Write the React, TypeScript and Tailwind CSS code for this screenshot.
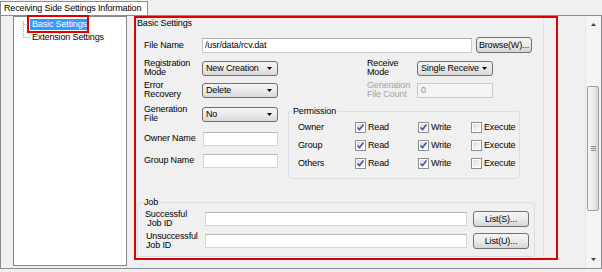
import React from "react";

function Combo({ text }: { text: string }) {
  return (
    <div className="h-[15px] w-[76px] shrink-0 rounded-[3px] border border-[#707070] bg-linear-to-b from-[#f4f4f4] via-[#ebebeb] to-[#d8d8d8] flex items-center justify-between pl-[3px] pr-[5px]">
      <span className="whitespace-nowrap">{text}</span>
      <svg className="shrink-0" width="5" height="3" viewBox="0 0 5 3">
        <path d="M0 0H5L2.5 3Z" fill="#000" />
      </svg>
    </div>
  );
}

function Btn({ text }: { text: string }) {
  return (
    <div className="h-[16px] w-[56px] shrink-0 rounded-[3px] border border-[#707070] bg-linear-to-b from-[#f4f4f4] via-[#ebebeb] to-[#d5d5d5] flex items-center justify-center whitespace-nowrap">
      {text}
    </div>
  );
}

function Check({ checked, label }: { checked: boolean; label: string }) {
  return (
    <div className="flex items-center">
      <div className="w-[11px] h-[11px] shrink-0 border border-[#8e8f8f] bg-white p-[1px]">
        <div className="w-full h-full bg-linear-to-br from-[#dcdcdc] to-[#fbfbfb] relative">
          {checked && (
            <svg className="absolute -left-[1px] -top-[1px]" width="9" height="9" viewBox="0 0 9 9">
              <path d="M1.5 4.5L3.5 6.5L7.5 1.5" stroke="#3a57a5" strokeWidth="1.6" fill="none" />
            </svg>
          )}
        </div>
      </div>
      <span className="ml-[2px] whitespace-nowrap">{label}</span>
    </div>
  );
}

function PermRow({ name, exec }: { name: string; exec: boolean }) {
  return (
    <div className="h-[13px] flex items-center pl-[9px]">
      <span className="w-[57px] shrink-0">{name}</span>
      <div className="w-[63px] shrink-0">
        <Check checked={true} label="Read" />
      </div>
      <div className="w-[53px] shrink-0">
        <Check checked={true} label="Write" />
      </div>
      <Check checked={exec} label="Execute" />
    </div>
  );
}

export default function App() {
  return (
    <div className="w-[602px] h-[272px] bg-[#f0f0f0] overflow-hidden font-['Liberation_Sans',Arial,sans-serif] text-[9px] leading-[9px] tracking-[-0.15px] text-black">
      {/* tab strip */}
      <div className="h-[15px] pt-[1px] flex">
        <div className="h-[14px] w-[148px] border border-b-0 border-[#898c95] bg-white pl-[3px] flex items-center whitespace-nowrap">
          Receiving Side Settings Information
        </div>
      </div>

      {/* tab page */}
      <div className="h-[254px] border border-[#898c95] flex">
        {/* tree */}
        <div className="relative ml-[12px] w-[114px] h-[250px] shrink-0 border border-[#828790] bg-white">
          <svg className="absolute left-[9px] top-[3px]" width="10" height="20" viewBox="0 0 10 20">
            <path d="M0.5 1V18M0.5 4.5H5M0.5 17.5H8" stroke="#a0a0a0" strokeWidth="1" strokeDasharray="1 1" fill="none" />
          </svg>
          <div className="-mt-[2px] ml-[13px] w-[62px] h-[18px] border-2 border-[#dc0000] pl-[1px] pt-[2px]">
            <div className="w-[57px] h-[11px] bg-[#3399ff] text-white pl-[2px] flex items-center whitespace-nowrap overflow-hidden">
              Basic Settings
            </div>
          </div>
          <div className="ml-[18px] h-[9px] flex items-center whitespace-nowrap">Extension Settings</div>
        </div>

        {/* red annotated settings area */}
        <div className="ml-[7px] w-[424px] h-[244px] shrink-0 border-2 border-[#dc0000]">
          <div className="w-[408px] h-full border-r border-[#e2e2e2] flex flex-col">
            <div className="h-[11px] pl-[1px] flex items-center">Basic Settings</div>

            {/* File name */}
            <div className="mt-[8px] h-[16px] pl-[8px] flex items-center">
              <span className="w-[58px] shrink-0">File Name</span>
              <div className="w-[270px] h-[15px] shrink-0 border border-[#c6cad0] border-t-[#abadb3] bg-white pl-[2px] flex items-center">
                /usr/data/rcv.dat
              </div>
              <div className="ml-[4px]">
                <Btn text="Browse(W)..." />
              </div>
            </div>

            {/* Registration / Receive mode */}
            <div className="mt-[8px] h-[15px] pl-[8px] flex items-center">
              <span className="w-[58px] shrink-0 -mt-[2px]">
                Registration
                <br />
                Mode
              </span>
              <Combo text="New Creation" />
              <span className="ml-[89px] w-[50px] shrink-0 -mt-[2px]">
                Receive
                <br />
                Mode
              </span>
              <Combo text="Single Receive" />
            </div>

            {/* Error recovery / generation file count */}
            <div className="mt-[7px] h-[15px] pl-[8px] flex items-center">
              <span className="w-[58px] shrink-0 -mt-[2px]">
                Error
                <br />
                Recovery
              </span>
              <Combo text="Delete" />
              <span className="ml-[89px] w-[50px] shrink-0 -mt-[2px] text-[#a3a3a3]">
                Generation
                <br />
                File Count
              </span>
              <div className="w-[76px] h-[15px] shrink-0 border border-[#c9c9c9] bg-[#f4f4f4] text-[#8d8d8d] pl-[3px] flex items-center">
                0
              </div>
            </div>

            {/* generation file, owner, group + permission */}
            <div className="mt-[9px] pl-[8px] flex items-start">
              <div className="w-[134px] shrink-0 flex flex-col">
                <div className="h-[15px] flex items-center">
                  <span className="w-[58px] shrink-0 -mt-[2px]">
                    Generation
                    <br />
                    File
                  </span>
                  <Combo text="No" />
                </div>
                <div className="mt-[9px] h-[15px] flex items-center">
                  <span className="w-[58px] shrink-0">Owner Name</span>
                  <div className="ml-[1px] w-[75px] h-[14px] border border-[#d3d6db] border-t-[#b5b8bd] bg-white" />
                </div>
                <div className="mt-[7px] h-[15px] flex items-center">
                  <span className="w-[58px] shrink-0">Group Name</span>
                  <div className="ml-[1px] w-[75px] h-[14px] border border-[#d3d6db] border-t-[#b5b8bd] bg-white" />
                </div>
              </div>
              <fieldset className="ml-[10px] w-[232px] h-[72px] shrink-0 border border-[#d5dfe5] rounded-[3px]">
                <legend className="ml-[3px] px-[1px] leading-[9px]">Permission</legend>
                <div className="mt-[5px] flex flex-col gap-[5px]">
                  <PermRow name="Owner" exec={false} />
                  <PermRow name="Group" exec={false} />
                  <PermRow name="Others" exec={false} />
                </div>
              </fieldset>
            </div>

            {/* Job */}
            <fieldset className="mt-[19px] ml-[1px] w-[398px] h-[59px] shrink-0 border border-[#d5dfe5] rounded-[3px]">
              <legend className="ml-[6px] leading-[9px]">Job</legend>
              <div className="mt-[4px] h-[16px] pl-[7px] flex items-center">
                <span className="w-[60px] shrink-0">
                  Successful
                  <br />
                  &nbsp;Job ID
                </span>
                <div className="w-[262px] h-[14px] shrink-0 border border-[#d3d6db] border-t-[#b5b8bd] bg-white" />
                <div className="ml-[6px]">
                  <Btn text="List(S)..." />
                </div>
              </div>
              <div className="mt-[6px] h-[16px] pl-[7px] flex items-center">
                <span className="w-[60px] shrink-0 pl-[1px]">
                  Unsuccessful
                  <br />
                  Job ID
                </span>
                <div className="w-[262px] h-[14px] shrink-0 border border-[#d3d6db] border-t-[#b5b8bd] bg-white" />
                <div className="ml-[6px]">
                  <Btn text="List(U)..." />
                </div>
              </div>
            </fieldset>
          </div>
        </div>

        <div className="flex-1" />

        {/* scrollbar */}
        <div className="w-[15px] mr-[1px] h-full shrink-0 flex flex-col bg-[#f4f4f4] border-l border-[#e6e6e6]">
          <div className="h-[17px] flex items-center justify-center">
            <svg width="5" height="3" viewBox="0 0 5 3">
              <path d="M2.5 0L5 3H0Z" fill="#404040" />
            </svg>
          </div>
          <div className="flex-1">
            <div className="mt-[53px] mx-[1px] h-[125px] rounded-[2px] border border-[#9b9b9b] bg-linear-to-r from-[#f6f6f6] via-[#ececec] to-[#d6d6d6] flex items-center justify-center">
              <svg width="5" height="5" viewBox="0 0 5 5">
                <path d="M0 0.5H5M0 2.5H5M0 4.5H5" stroke="#8a8a8a" strokeWidth="1" />
              </svg>
            </div>
          </div>
          <div className="h-[17px] flex items-center justify-center">
            <svg width="5" height="3" viewBox="0 0 5 3">
              <path d="M0 0H5L2.5 3Z" fill="#404040" />
            </svg>
          </div>
        </div>
      </div>
    </div>
  );
}
